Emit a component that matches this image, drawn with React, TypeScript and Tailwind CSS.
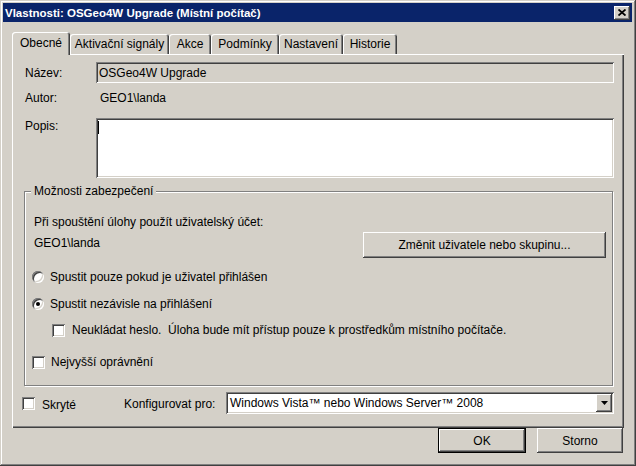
import { ReactNode } from 'react';

const raised =
  'shadow-[inset_-1px_-1px_#404040,inset_1px_1px_#fff,inset_-2px_-2px_#808080,inset_2px_2px_#d4d0c8]';
const sunken =
  'shadow-[inset_1px_1px_#808080,inset_-1px_-1px_#fff,inset_2px_2px_#404040,inset_-2px_-2px_#d4d0c8]';

function Checkbox() {
  return <div className={`w-[13px] h-[13px] shrink-0 bg-white ${sunken}`} />;
}

function Radio({ checked }: { checked?: boolean }) {
  return (
    <div className="w-[12px] h-[12px] shrink-0 rounded-full bg-white flex items-center justify-center shadow-[inset_1px_1px_#808080,inset_-1px_-1px_#fff,inset_2px_2px_#404040,inset_-2px_-2px_#d4d0c8]">
      {checked && <div className="w-[4px] h-[4px] rounded-full bg-black" />}
    </div>
  );
}

function Tab({ label, active, w }: { label: string; active?: boolean; w: string }) {
  return (
    <div
      className={`${w} flex items-center justify-center rounded-t-[3px] bg-[#d4d0c8] shadow-[inset_1px_1px_#fff,inset_-1px_0_#404040,inset_-2px_0_#808080] ${
        active ? 'h-[23px] -mb-px relative z-10 pb-[2px]' : 'h-[20px]'
      }`}
    >
      {label}
    </div>
  );
}

function Label({ children }: { children: ReactNode }) {
  return <div className="w-[71px] shrink-0 ml-[3px] leading-[14px]">{children}</div>;
}

export default function App() {
  return (
    <div className="w-[636px] h-[466px] bg-[#d4d0c8] text-black text-[12px] leading-[14px] font-['Liberation_Sans',Arial,sans-serif] p-[3px] pr-[4px] flex flex-col shadow-[inset_-1px_-1px_#404040,inset_1px_1px_#d4d0c8,inset_-2px_-2px_#808080,inset_2px_2px_#fff]">
      {/* Title bar */}
      <div className="h-[19px] bg-[#0a246a] flex items-center justify-between pl-[2px] pr-[2px]">
        <span className="text-white font-bold text-[11.5px]">
          Vlastnosti: OSGeo4W Upgrade (Místní počítač)
        </span>
        <div className={`w-[16px] h-[14px] bg-[#d4d0c8] flex items-center justify-center ${raised}`}>
          <svg width="8" height="7" viewBox="0 0 8 7">
            <path d="M0.5 0.5 L7.5 6.5 M7.5 0.5 L0.5 6.5" stroke="#000" strokeWidth="1.8" />
          </svg>
        </div>
      </div>

      <div className="flex-1 flex flex-col pl-[9px] pr-[5px] pt-[10px]">
        {/* Tabs */}
        <div className="h-[22px] flex items-end">
          <Tab label="Obecné" active w="w-[58px]" />
          <Tab label="Aktivační signály" w="w-[99px]" />
          <Tab label="Akce" w="w-[42px]" />
          <Tab label="Podmínky" w="w-[68px]" />
          <Tab label="Nastavení" w="w-[64px]" />
          <Tab label="Historie" w="w-[54px]" />
        </div>

        {/* Panel */}
        <div className="h-[374px] w-[612px] flex flex-col pl-[10px] pr-[10px] shadow-[inset_1px_1px_#fff,inset_-1px_-1px_#404040,inset_-2px_-2px_#808080]">
          <div className="mt-[8px] h-[21px] flex items-center">
            <Label>Název:</Label>
            <div className={`flex-1 h-[21px] flex items-center pl-[3px] ${sunken}`}>OSGeo4W Upgrade</div>
          </div>

          <div className="mt-[5px] h-[20px] flex items-center">
            <Label>Autor:</Label>
            <div className="pl-[4px]">GEO1\landa</div>
          </div>

          <div className="mt-[10px] h-[60px] flex items-start">
            <div className="pt-[1px]">
              <Label>Popis:</Label>
            </div>
            <div className={`flex-1 h-[60px] bg-white pl-[2px] pt-[3px] ${sunken}`}>
              <div className="w-px h-[13px] bg-black" />
            </div>
          </div>

          {/* Group box */}
          <div className="relative mt-[13px] ml-[2px] w-[589px] h-[195px] border border-[#808080] shadow-[inset_1px_1px_#fff,1px_1px_#fff] flex flex-col pl-[7px] pr-[6px]">
            <span className="absolute -top-[8px] left-[6px] px-[3px] bg-[#d4d0c8]">Možnosti zabezpečení</span>
            <div className="mt-[23px] ml-[2px]">Při spouštění úlohy použít uživatelský účet:</div>
            <div className="mt-[3px] h-[26px] flex items-start justify-between">
              <div className="mt-[4px] ml-[2px]">GEO1\landa</div>
              <div className={`w-[243px] h-[26px] flex items-center justify-center ${raised}`}>
                Změnit uživatele nebo skupinu...
              </div>
            </div>
            <div className="mt-[12px] h-[14px] flex items-center gap-[6px]">
              <Radio />
              <span>Spustit pouze pokud je uživatel přihlášen</span>
            </div>
            <div className="mt-[13px] h-[14px] flex items-center gap-[6px]">
              <Radio checked />
              <span>Spustit nezávisle na přihlášení</span>
            </div>
            <div className="mt-[12px] ml-[20px] h-[14px] flex items-center gap-[7px]">
              <Checkbox />
              <span>Neukládat heslo.&nbsp; Úloha bude mít přístup pouze k prostředkům místního počítače.</span>
            </div>
            <div className="mt-[18px] h-[14px] flex items-center gap-[6px]">
              <Checkbox />
              <span>Nejvyšší oprávnění</span>
            </div>
          </div>

          {/* Bottom row */}
          <div className="mt-[6px] h-[22px] flex items-center">
            <div className="w-[102px] flex items-center gap-[7px]">
              <Checkbox />
              <span className="mt-[3px]">Skryté</span>
            </div>
            <div className="w-[102px] mt-[2px]">Konfigurovat pro:</div>
            <div className={`flex-1 h-[22px] bg-white flex items-center justify-between pl-[4px] pr-[2px] ${sunken}`}>
              <span>Windows Vista™ nebo Windows Server™ 2008</span>
              <div className={`w-[16px] h-[18px] bg-[#d4d0c8] flex items-center justify-center ${raised}`}>
                <svg width="7" height="4" viewBox="0 0 7 4">
                  <path d="M0 0 H7 L3.5 4 Z" fill="#000" />
                </svg>
              </div>
            </div>
          </div>
        </div>

        {/* Dialog buttons */}
        <div className="flex justify-end gap-[11px] pr-[4px]">
          <div className="w-[88px] h-[25px] flex items-center justify-center shadow-[inset_0_0_0_1px_#000,inset_-2px_-2px_#404040,inset_2px_2px_#fff,inset_-3px_-3px_#808080]">
            OK
          </div>
          <div className={`w-[86px] h-[25px] flex items-center justify-center ${raised}`}>Storno</div>
        </div>
      </div>
    </div>
  );
}
